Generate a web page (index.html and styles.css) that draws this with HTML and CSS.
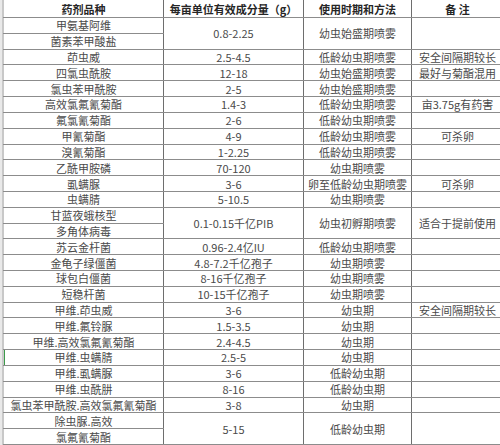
FILE: index.html
```html
<!DOCTYPE html>
<html lang="zh">
<head>
<meta charset="utf-8">
<link rel="stylesheet" href="styles.css">
</head>
<body>
<div class="sheet">
  <div class="gutter"></div>
  <table class="grid">
    <colgroup>
      <col class="c1"><col class="c2"><col class="c3"><col class="c4">
    </colgroup>
    <thead>
      <tr class="head"><th>药剂品种</th><th>每亩单位有效成分量（g）</th><th>使用时期和方法</th><th>备 注</th></tr>
    </thead>
    <tbody>
      <tr><td>甲氨基阿维</td><td rowspan="2">0.8-2.25</td><td rowspan="2">幼虫始盛期喷雾</td><td rowspan="2"></td></tr>
      <tr><td>菌素苯甲酸盐</td></tr>
      <tr><td>茚虫威</td><td>2.5-4.5</td><td>低龄幼虫期喷雾</td><td>安全间隔期较长</td></tr>
      <tr><td>四氯虫酰胺</td><td>12-18</td><td>幼虫始盛期喷雾</td><td>最好与菊酯混用</td></tr>
      <tr><td>氯虫苯甲酰胺</td><td>2-5</td><td>幼虫始盛期喷雾</td><td></td></tr>
      <tr><td>高效氯氟氰菊酯</td><td>1.4-3</td><td>低龄幼虫期喷雾</td><td>亩3.75g有药害</td></tr>
      <tr><td>氟氯氰菊酯</td><td>2-6</td><td>低龄幼虫期喷雾</td><td></td></tr>
      <tr><td>甲氰菊酯</td><td>4-9</td><td>低龄幼虫期喷雾</td><td>可杀卵</td></tr>
      <tr><td>溴氰菊酯</td><td>1-2.25</td><td>低龄幼虫期喷雾</td><td></td></tr>
      <tr><td>乙酰甲胺磷</td><td>70-120</td><td>幼虫期喷雾</td><td></td></tr>
      <tr><td>虱螨脲</td><td>3-6</td><td>卵至低龄幼虫期喷雾</td><td>可杀卵</td></tr>
      <tr><td>虫螨腈</td><td>5-10.5</td><td>幼虫期喷雾</td><td></td></tr>
      <tr><td>甘蓝夜蛾核型</td><td rowspan="2">0.1-0.15千亿PIB</td><td rowspan="2">幼虫初孵期喷雾</td><td rowspan="2">适合于提前使用</td></tr>
      <tr><td>多角体病毒</td></tr>
      <tr><td>苏云金杆菌</td><td>0.96-2.4亿IU</td><td>低龄幼虫期喷雾</td><td></td></tr>
      <tr><td>金龟子绿僵菌</td><td>4.8-7.2千亿孢子</td><td>幼虫期喷雾</td><td></td></tr>
      <tr><td>球包白僵菌</td><td>8-16千亿孢子</td><td>幼虫期喷雾</td><td></td></tr>
      <tr><td>短稳杆菌</td><td>10-15千亿孢子</td><td>幼虫期喷雾</td><td></td></tr>
      <tr><td>甲维.茚虫威</td><td>3-6</td><td>幼虫期</td><td>安全间隔期较长</td></tr>
      <tr><td>甲维.氟铃脲</td><td>1.5-3.5</td><td>幼虫期</td><td></td></tr>
      <tr><td>甲维.高效氯氟氰菊酯</td><td>2.4-4.5</td><td>幼虫期</td><td></td></tr>
      <tr><td class="sel">甲维.虫螨腈</td><td>2.5-5</td><td>幼虫期</td><td></td></tr>
      <tr><td>甲维.虱螨脲</td><td>3-6</td><td>低龄幼虫期</td><td></td></tr>
      <tr><td>甲维.虫酰肼</td><td>8-16</td><td>低龄幼虫期</td><td></td></tr>
      <tr><td>氯虫苯甲酰胺.高效氯氟氰菊酯</td><td>3-8</td><td>幼虫期</td><td></td></tr>
      <tr><td>除虫脲.高效</td><td rowspan="2">5-15</td><td rowspan="2">低龄幼虫期</td><td rowspan="2"></td></tr>
      <tr><td>氯氟氰菊酯</td></tr>
    </tbody>
  </table>
</div>
</body>
</html>
```
FILE: styles.css
```css
html, body {
  margin: 0;
  padding: 0;
  background: #ffffff;
}

.sheet {
  display: flex;
  width: 500px;
  height: 445px;
  overflow: hidden;
  background: #ffffff;
}

.gutter {
  flex: 0 0 3px;
  background: #e9e9e9;
  border-right: 1px solid #c8c8c8;
  box-sizing: border-box;
}

.grid {
  flex: 0 0 auto;
  width: 500px;
  table-layout: fixed;
  border-collapse: collapse;
  font-family: "Noto Sans CJK SC", "Noto Sans", sans-serif;
  font-size: 11px;
  color: #4a4a4a;
  margin-top: -1px;
}

.c1 { width: 160px; }
.c2 { width: 140px; }
.c3 { width: 108px; }
.c4 { width: 92px; }

.grid th,
.grid td {
  padding: 0;
  text-align: center;
  vertical-align: middle;
  white-space: nowrap;
  overflow: hidden;
  border-top: 1px solid #8c8c8c;
  border-bottom: 1px solid #8c8c8c;
  border-left: 1px solid #6e6e6e;
  border-right: 1px solid #6e6e6e;
  line-height: 14px;
}

.grid tr td:first-child,
.grid tr th:first-child {
  border-left: 1px solid #c8c8c8;
}

.head th {
  height: 17px;
  font-weight: bold;
  color: #262626;
}

.grid tbody tr {
  height: 15.67px;
}

.grid td.sel {
  box-shadow: inset 1px 0 0 #3c9a4a;
}
```
